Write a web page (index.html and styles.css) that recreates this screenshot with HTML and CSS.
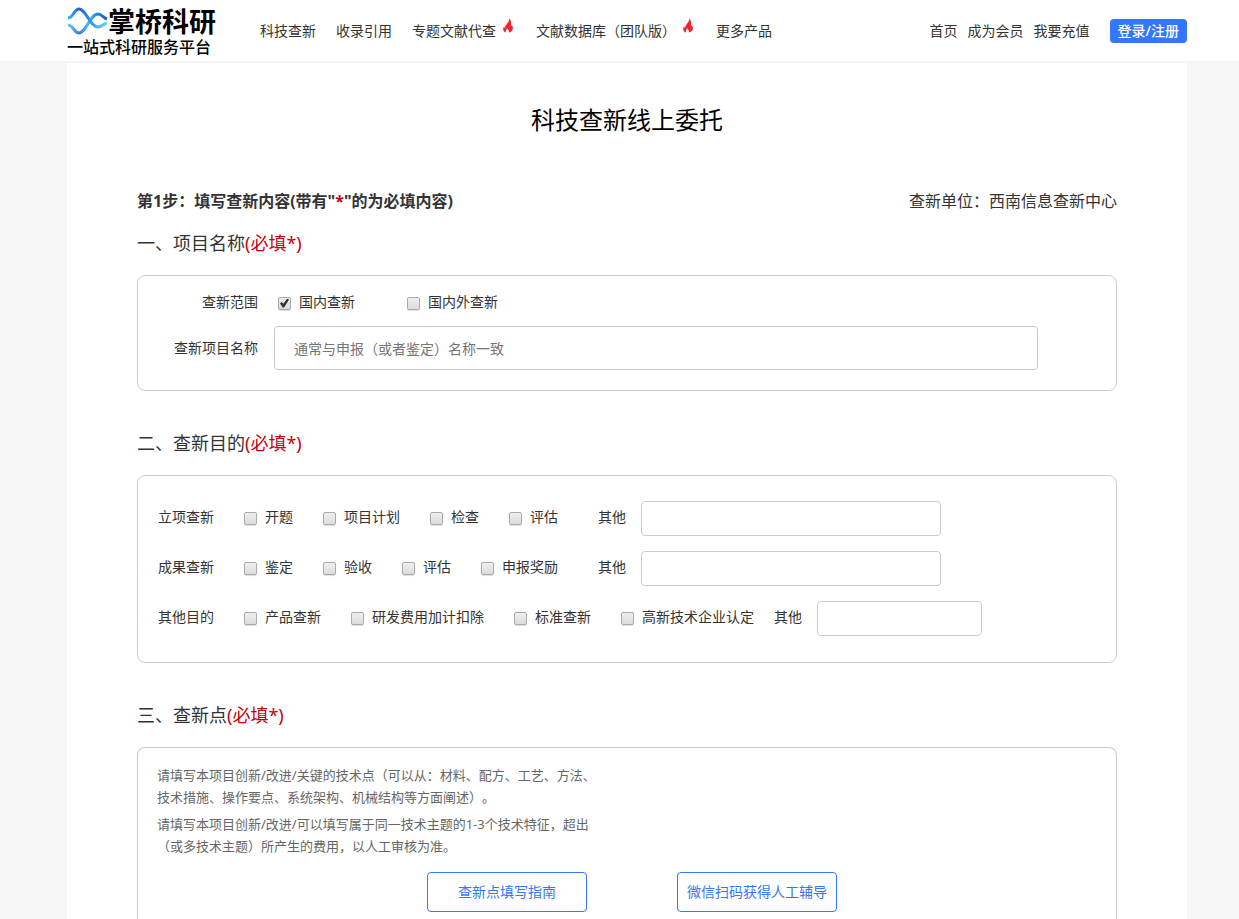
FILE: index.html
```html
<!DOCTYPE html>
<html lang="zh-CN">
<head>
<meta charset="utf-8">
<meta name="viewport" content="width=device-width, initial-scale=1">
<title>科技查新线上委托</title>
<link rel="stylesheet" href="styles.css">
</head>
<body>
<svg class="defs" width="0" height="0" aria-hidden="true">
  <symbol id="flame" viewBox="0 0 10 15">
    <path fill="#f5222d" d="M6.200 0C6.600 2 5.600 3.600 4.200 5.400C2.700 7.300 1.900 8.600 2.100 10.200C1.400 9.900 1.200 9.100 1.200 8.300C.1 9.600-.1 11.400.6 12.700C1.100 13.700 1.900 14.300 2.900 14.600C2.500 12.900 3.100 11.500 4.500 9.900C4.500 11 4.900 11.500 5.500 12C6.100 12.600 6.200 13.600 5.900 14.600C8.300 14.100 9.900 12.500 9.900 10.300C9.900 8.900 9.200 7.900 8.800 7C8.600 7.700 8.300 8.100 7.800 8.400C8.300 5.500 8.200 2 6.200 0Z"/>
  </symbol>
</svg>
<header class="header">
  <div class="header-inner">
    <a class="logo" href="#">
      <span class="brand">
        <svg class="waves" viewBox="0 0 41 30" width="41" height="30" aria-hidden="true">
          <defs>
            <linearGradient id="up" gradientUnits="userSpaceOnUse" x1="0" x2="41" y1="0" y2="0"><stop offset="0" stop-color="#3bc0ee"/><stop offset=".3" stop-color="#1d62cf"/><stop offset=".5" stop-color="#2a86dc"/><stop offset=".75" stop-color="#4cb4f0"/><stop offset="1" stop-color="#66d6f6"/></linearGradient>
            <linearGradient id="down" gradientUnits="userSpaceOnUse" x1="0" x2="41" y1="0" y2="0"><stop offset="0" stop-color="#66d6f6"/><stop offset=".3" stop-color="#4478d0"/><stop offset=".5" stop-color="#45b8f0"/><stop offset=".75" stop-color="#2486dc"/><stop offset="1" stop-color="#1559b8"/></linearGradient>
          </defs>
          <path d="M1 19C6 19 7 27 12 27C19 27 23 8 31 8C35 8 36 12 40 13" fill="none" stroke="url(#down)" stroke-width="3"/>
          <path d="M1 12C6 12 7 3 12 3C19 3 23 21 31 21C35 21 36 18 40 17" fill="none" stroke="url(#up)" stroke-width="3"/>
        </svg>
        <span class="name">掌桥科研</span>
      </span>
      <span class="slogan">一站式科研服务平台</span>
    </a>
    <nav class="nav">
      <a href="#">科技查新</a>
      <a href="#">收录引用</a>
      <a href="#">专题文献代查<svg class="flame" aria-hidden="true"><use href="#flame"/></svg></a>
      <a href="#">文献数据库（团队版）<svg class="flame" aria-hidden="true"><use href="#flame"/></svg></a>
      <a href="#">更多产品</a>
    </nav>
    <div class="account">
      <a href="#">首页</a>
      <a href="#">成为会员</a>
      <a href="#">我要充值</a>
      <button class="login" type="button">登录/注册</button>
    </div>
  </div>
</header>
<main class="page">
  <h1>科技查新线上委托</h1>
  <div class="step">
    <h2>第1步：填写查新内容(带有"<span class="red">*</span>"的为必填内容)</h2>
    <span>查新单位：西南信息查新中心</span>
  </div>

  <h3>一、项目名称<span class="red">(必填*)</span></h3>
  <section class="card project">
    <span class="label">查新范围</span>
    <div class="scope">
      <label class="check"><input type="checkbox" checked>国内查新</label>
      <label class="check"><input type="checkbox">国内外查新</label>
    </div>
    <label class="label" for="project-name">查新项目名称</label>
    <input class="field" id="project-name" type="text" placeholder="通常与申报（或者鉴定）名称一致">
  </section>

  <h3>二、查新目的<span class="red">(必填*)</span></h3>
  <section class="card purpose">
    <div class="row">
      <span class="label">立项查新</span>
      <div class="options">
        <label class="check"><input type="checkbox">开题</label>
        <label class="check"><input type="checkbox">项目计划</label>
        <label class="check"><input type="checkbox">检查</label>
        <label class="check"><input type="checkbox">评估</label>
      </div>
      <label class="other"><span>其他</span><input class="field" type="text"></label>
    </div>
    <div class="row">
      <span class="label">成果查新</span>
      <div class="options">
        <label class="check"><input type="checkbox">鉴定</label>
        <label class="check"><input type="checkbox">验收</label>
        <label class="check"><input type="checkbox">评估</label>
        <label class="check"><input type="checkbox">申报奖励</label>
      </div>
      <label class="other"><span>其他</span><input class="field" type="text"></label>
    </div>
    <div class="row">
      <span class="label">其他目的</span>
      <div class="options">
        <label class="check"><input type="checkbox">产品查新</label>
        <label class="check"><input type="checkbox">研发费用加计扣除</label>
        <label class="check"><input type="checkbox">标准查新</label>
        <label class="check"><input type="checkbox">高新技术企业认定</label>
      </div>
      <label class="other short"><span>其他</span><input class="field" type="text"></label>
    </div>
  </section>

  <h3>三、查新点<span class="red">(必填*)</span></h3>
  <section class="card points">
    <p>请填写本项目创新/改进/关键的技术点（可以从：材料、配方、工艺、方法、技术措施、操作要点、系统架构、机械结构等方面阐述）。</p>
    <p>请填写本项目创新/改进/可以填写属于同一技术主题的1-3个技术特征，超出（或多技术主题）所产生的费用，以人工审核为准。</p>
    <div class="actions">
      <button type="button">查新点填写指南</button>
      <button type="button">微信扫码获得人工辅导</button>
    </div>
  </section>
</main>
</body>
</html>
```
FILE: styles.css
```css
* { box-sizing: border-box; }
body {
  margin: 0;
  min-height: 100vh;
  display: flex;
  flex-direction: column;
  padding-left: 15px;
  background: #f7f7f7;
  color: #333;
  font: 14px/20px "Noto Sans", "Noto Sans CJK SC", sans-serif;
  text-spacing-trim: space-all;
}
a { color: inherit; text-decoration: none; }
h1, h2, h3, p { margin: 0; font-weight: 400; }
button, input { font: inherit; }
.defs { position: absolute; }
.red { color: #c7000b; }

.header {
  margin-left: -15px;
  padding-left: 15px;
  background: #fff;
  border-bottom: 2px solid #f5f5f5;
}
.header-inner {
  display: flex;
  align-items: center;
  max-width: 1120px;
  height: 61px;
  margin: 0 auto;
  white-space: nowrap;
}
.logo {
  display: flex;
  flex-direction: column;
  width: 193px;
  color: #000;
}
.brand { display: flex; height: 32px; }
.name { font-size: 27px; line-height: 32px; font-weight: 700; }
.slogan { font-size: 16px; line-height: 18px; font-weight: 500; }
.nav { display: flex; gap: 20px; }
.nav a { display: flex; }
.flame { width: 10px; height: 15px; margin: -3px 3px 0 7px; }
.account {
  display: flex;
  align-items: center;
  gap: 10px;
  margin-left: auto;
}
.login {
  margin-left: 10px;
  padding: 0 8px;
  height: 24px;
  border: 0;
  border-radius: 4px;
  background: #3377ff;
  color: #fff;
  font-weight: 500;
}

.page {
  flex: 1;
  display: flex;
  flex-direction: column;
  width: 100%;
  max-width: 1120px;
  margin: 0 auto;
  padding: 40px 70px 0;
  background: #fff;
}
h1 {
  color: #000;
  font-size: 24px;
  line-height: 34px;
  text-align: center;
}
.step {
  display: flex;
  justify-content: space-between;
  margin-top: 52px;
  font-size: 16px;
  line-height: 24px;
}
.step h2 { font-size: 16px; font-weight: 700; }
h3 { font-size: 18px; line-height: 28px; margin: 38px 0 18px; }
.step + h3 { margin-top: 16px; }

.card {
  border: 1px solid #ccc;
  border-radius: 8px;
}
.field {
  min-width: 0;
  border: 1px solid #ccc;
  border-radius: 4px;
  background: #fff;
  color: #333;
}
.field::placeholder { color: #757575; opacity: 1; }
.check { display: flex; align-items: center; gap: 8px; }
.check input {
  appearance: none;
  width: 13px;
  height: 13px;
  margin: 2px 0 0;
  padding: 1px;
  border: 1px solid #aaa;
  border-radius: 2px;
  background: linear-gradient(#eee, #dcdcdc);
  box-shadow: 0 1px 1px #ddd;
}
.check input:checked::before {
  content: "";
  display: block;
  width: 9px;
  height: 9px;
  background: #333;
  clip-path: polygon(0 55%, 20% 38%, 38% 58%, 80% 0, 100% 15%, 45% 100%, 30% 100%);
}

.project {
  display: grid;
  grid-template-columns: 100px minmax(0, 764px);
  column-gap: 16px;
  row-gap: 14px;
  align-items: center;
  padding: 16px 20px 20px;
}
.project .label { text-align: right; }
.scope { display: flex; gap: 52px; padding-left: 4px; }
.project .field { height: 44px; padding: 0 19px; }

.purpose {
  display: flex;
  flex-direction: column;
  gap: 15px;
  padding: 25px 20px 26px;
}
.row {
  display: flex;
  align-items: flex-start;
  line-height: 32px;
  white-space: nowrap;
}
.options { display: flex; gap: 30px; margin-left: 30px; }
.other { display: flex; gap: 15px; margin-left: 40px; }
.other .field { width: 300px; height: 35px; }
.short { margin-left: 20px; }
.short .field { width: 165px; }

.points {
  flex: 1;
  border-bottom: 0;
  border-radius: 8px 8px 0 0;
  padding: 16px 19px 0;
}
.points p {
  max-width: 441px;
  margin-bottom: 5px;
  color: #666;
  font-size: 13px;
  line-height: 22px;
}
.actions {
  display: flex;
  justify-content: center;
  gap: 90px;
  margin-top: 15px;
  padding-left: 10px;
}
.actions button {
  width: 160px;
  height: 40px;
  padding: 0;
  border: 1px solid #3377ff;
  border-radius: 4px;
  background: #fff;
  color: #3377ff;
}
```
